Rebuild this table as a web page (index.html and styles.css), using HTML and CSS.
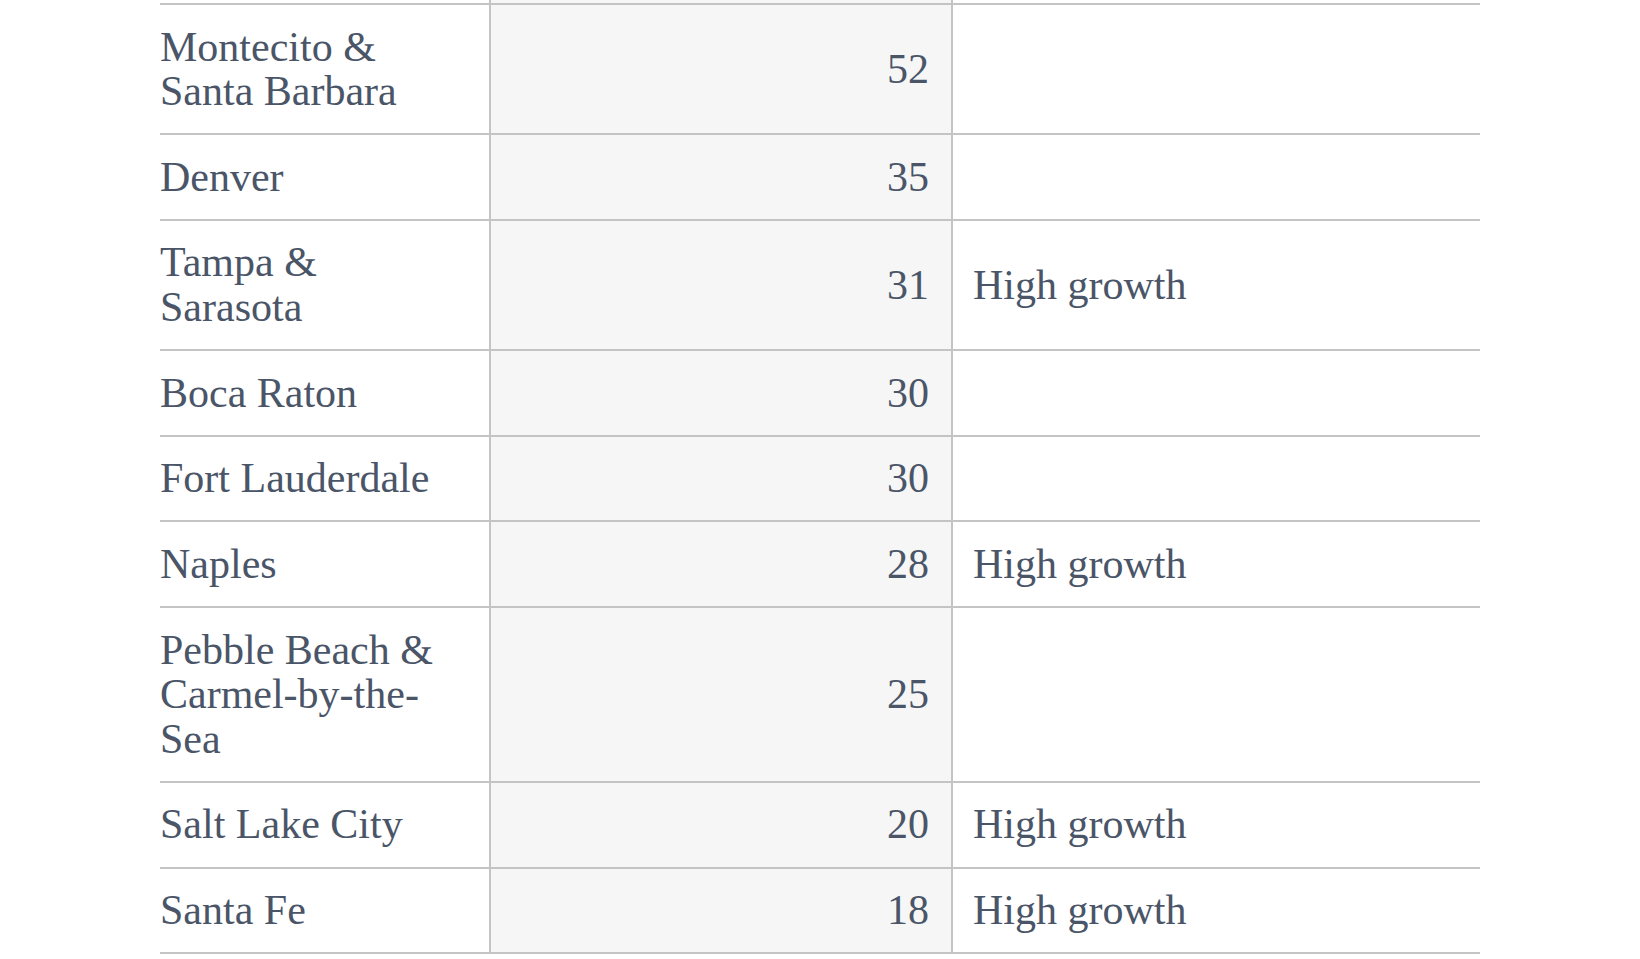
FILE: index.html
```html
<!DOCTYPE html>
<html lang="en">
<head>
<meta charset="utf-8">
<title>Markets</title>
<link rel="stylesheet" href="styles.css">
</head>
<body>
<div class="markets" role="table">
  <div class="cell name spacer"></div><div class="cell num spacer"></div><div class="cell note spacer"></div>

  <div class="cell name">Montecito &amp; Santa Barbara</div><div class="cell num">52</div><div class="cell note"></div>
  <div class="cell name">Denver</div><div class="cell num">35</div><div class="cell note"></div>
  <div class="cell name">Tampa &amp; Sarasota</div><div class="cell num">31</div><div class="cell note">High growth</div>
  <div class="cell name">Boca Raton</div><div class="cell num">30</div><div class="cell note"></div>
  <div class="cell name">Fort Lauderdale</div><div class="cell num">30</div><div class="cell note"></div>
  <div class="cell name">Naples</div><div class="cell num">28</div><div class="cell note">High growth</div>
  <div class="cell name">Pebble Beach &amp; Carmel-by-the-Sea</div><div class="cell num">25</div><div class="cell note"></div>
  <div class="cell name">Salt Lake City</div><div class="cell num">20</div><div class="cell note">High growth</div>
  <div class="cell name">Santa Fe</div><div class="cell num">18</div><div class="cell note">High growth</div>
</div>
</body>
</html>
```

FILE: styles.css
```css
html, body {
  margin: 0;
  padding: 0;
  background: #ffffff;
}

.markets {
  width: 1320px;
  margin: 0 auto;
  display: grid;
  grid-template-columns: 329px 464px 527px;
  font-family: "Liberation Serif", "Times New Roman", serif;
  font-size: 42px;
  line-height: 44.5px;
  color: #4a5568;
}

.cell {
  box-sizing: border-box;
  display: flex;
  align-items: center;
  padding: 19.6px 0;
  border-bottom: 2px solid #c4c4c4;
}

.name {
  padding-right: 40px;
}

.num {
  justify-content: flex-end;
  padding-right: 22px;
  background: #f6f6f6;
  border-left: 2px solid #c4c4c4;
  border-right: 2px solid #c4c4c4;
}

.note {
  padding-left: 20px;
}

.spacer {
  height: 5px;
  padding: 0;
}
```
